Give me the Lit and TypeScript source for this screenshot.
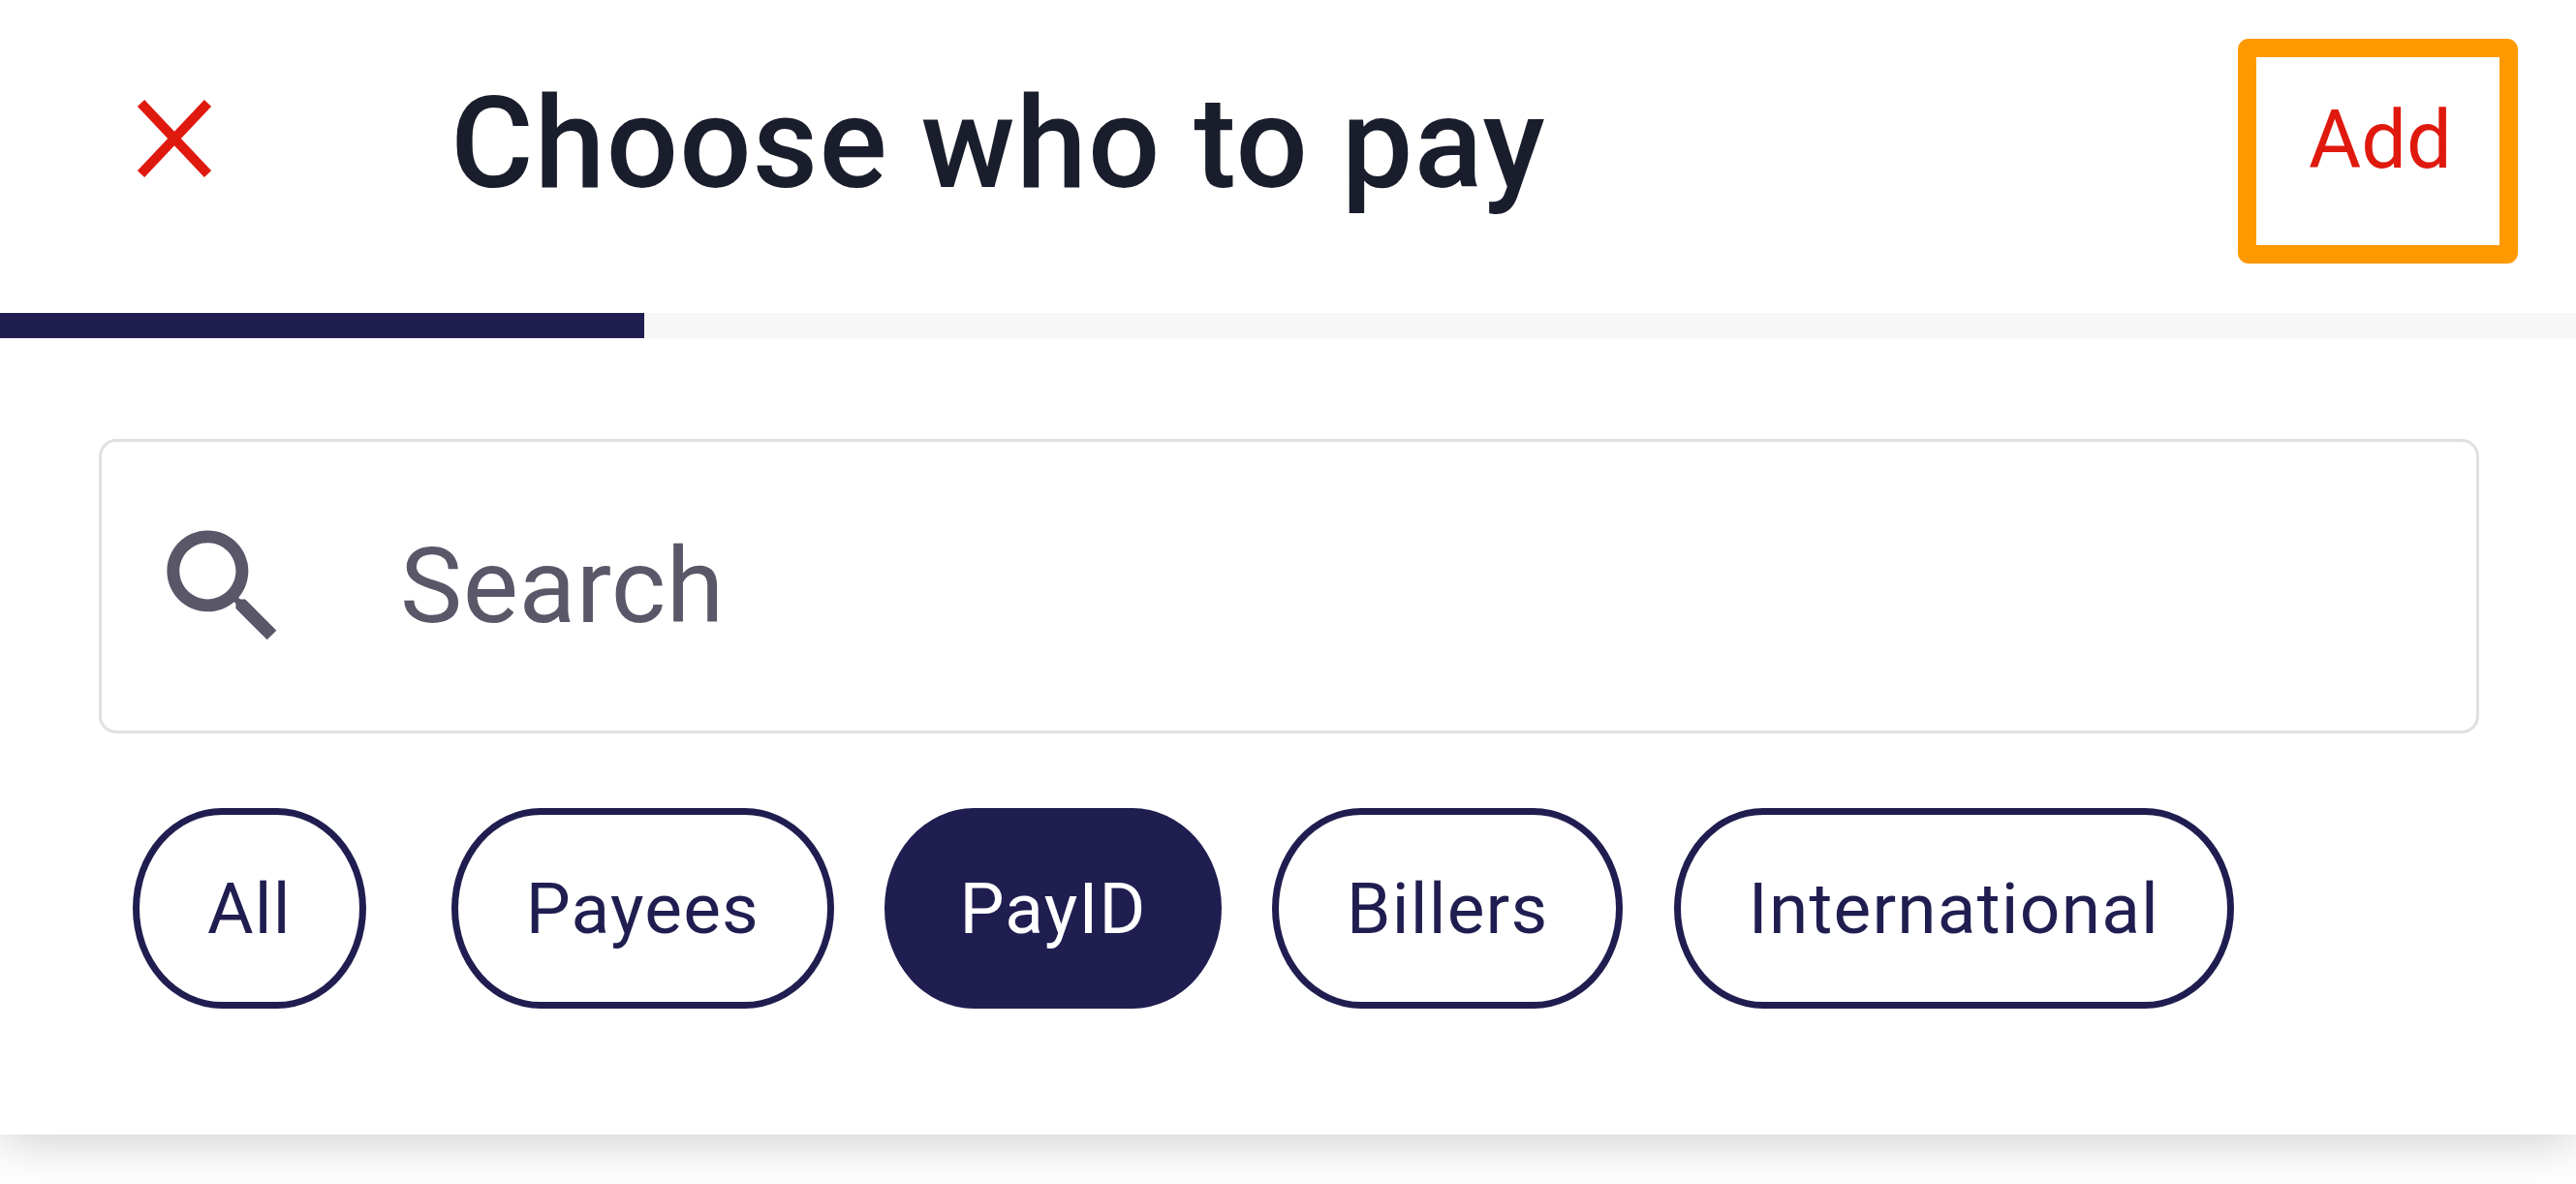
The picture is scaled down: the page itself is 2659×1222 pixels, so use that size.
import { LitElement, html, css } from "lit";
import { customElement } from "lit/decorators.js";

const CHIPS = ["All", "Payees", "PayID", "Billers", "International"];

@customElement("app-root")
export class AppRoot extends LitElement {
  static styles = css`
    :host {
      display: block;
      height: 1222px;
      background: #fff;
      font-family: Roboto, "Liberation Sans", sans-serif;
      overflow: hidden;
    }
    .panel {
      height: 1171px;
      background: #fff;
      box-shadow: 0 4px 50px rgba(0, 0, 0, 0.22);
      display: flex;
      flex-direction: column;
    }
    .header {
      height: 323px;
      flex: none;
      display: flex;
      align-items: flex-start;
      padding: 0 60px 0 142px;
      box-sizing: border-box;
    }
    .close {
      width: 76px;
      height: 80px;
      margin-top: 103px;
      flex: none;
      display: block;
    }
    .title {
      margin: 68px 0 0 247px;
      flex: 1;
      font-size: 131px;
      letter-spacing: 1.2px;
      line-height: 160px;
      font-weight: 500;
      color: #1a1d2b;
      white-space: nowrap;
    }
    .add {
      flex: none;
      width: 289px;
      height: 232px;
      margin-top: 40px;
      box-sizing: border-box;
      border: 19px solid #ff9900;
      border-radius: 11px;
      color: #e0190f;
      font-size: 83px;
      line-height: 100px;
      text-align: center;
      padding: 36px 0 0 5px;
    }
    .track {
      height: 26px;
      flex: none;
      background: #f7f7f7;
    }
    .fill {
      height: 100%;
      width: 25%;
      background: #201e50;
    }
    .search {
      margin: 104px 100px 0 102px;
      height: 304px;
      box-sizing: border-box;
      border: 3px solid #e0e0e4;
      border-radius: 18px;
      display: flex;
      align-items: center;
      padding-left: 48px;
      flex: none;
    }
    .search svg {
      width: 155px;
      height: 155px;
      flex: none;
      display: block;
    }
    .search span {
      margin-left: 105px;
      font-size: 108px;
      letter-spacing: 0.5px;
      color: #5a5768;
    }
    .chips {
      display: flex;
      gap: 52.5px;
      margin: 77px 0 0 137px;
    }
    .chip {
      height: 207px;
      box-sizing: border-box;
      border: 7px solid #201e50;
      border-radius: 92px / 103.5px;
      color: #201e50;
      font-size: 73px;
      letter-spacing: 1.2px;
      display: flex;
      align-items: center;
      justify-content: center;
      padding: 0 70px;
    }
    .chip.first {
      margin-right: 35.5px;
    }
    .chip.on {
      background: #201e50;
      color: #fff;
    }
  `;

  render() {
    return html`
      <div class="panel">
        <div class="header">
          <svg class="close" viewBox="0 0 76 80">
            <path d="M3.5 3.5 72.5 76.5M72.5 3.5 3.5 76.5" stroke="#e0190f" stroke-width="10" fill="none" />
          </svg>
          <div class="title">Choose who to pay</div>
          <div class="add">Add</div>
        </div>
        <div class="track"><div class="fill"></div></div>
        <div class="search">
          <svg viewBox="0 0 24 24">
            <path
              fill="#5a5768"
              d="M15.5 14h-.79l-.28-.27C15.41 12.59 16 11.11 16 9.5 16 5.91 13.09 3 9.5 3S3 5.91 3 9.5 5.91 16 9.5 16c1.61 0 3.09-.59 4.23-1.57l.27.28v.79l5 4.99L20.49 19l-4.99-5zm-6 0C7.01 14 5 11.99 5 9.5S7.01 5 9.5 5 14 7.01 14 9.5 11.99 14 9.5 14z"
            />
          </svg>
          <span>Search</span>
        </div>
        <div class="chips">
          ${CHIPS.map(
            (c, i) =>
              html`<div class="chip ${i === 0 ? "first" : ""} ${c === "PayID" ? "on" : ""}">${c}</div>`
          )}
        </div>
      </div>
    `;
  }
}
